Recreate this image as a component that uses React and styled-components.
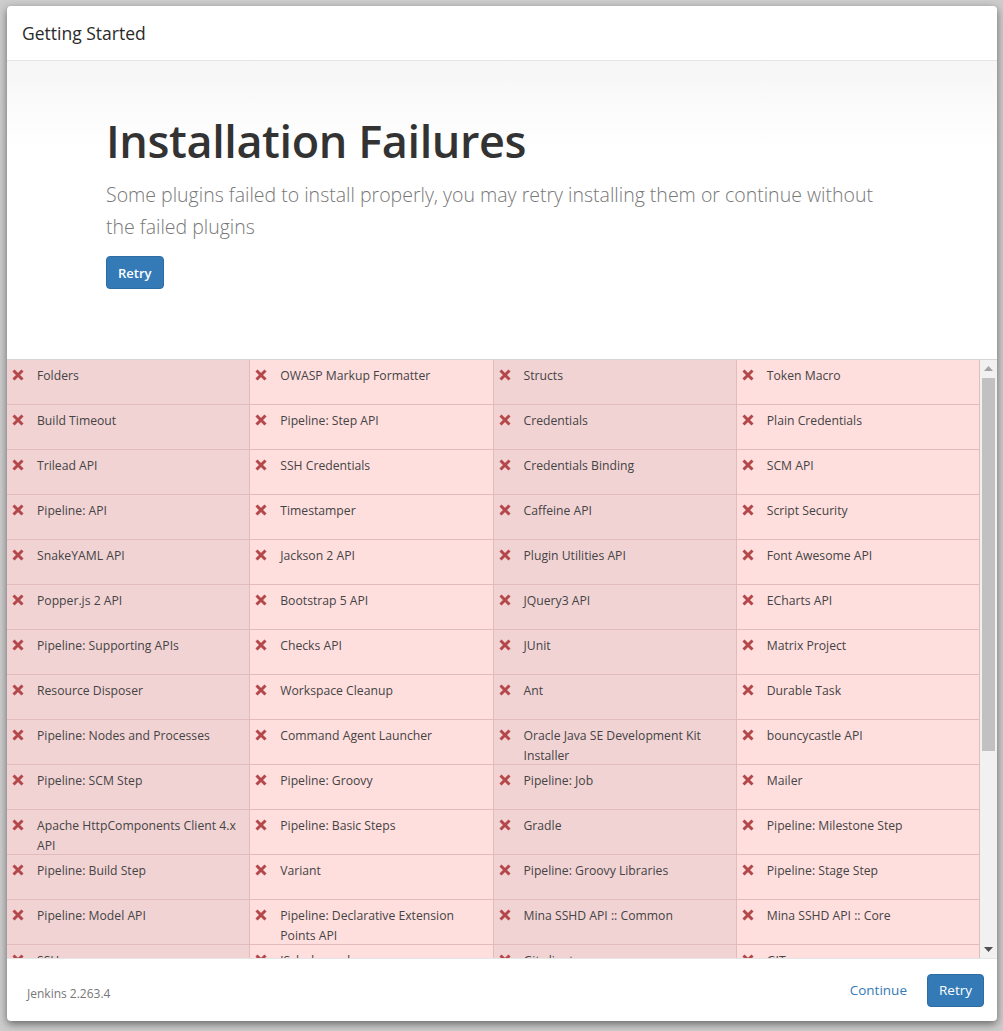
import React from "react";
import styled, { createGlobalStyle } from "styled-components";

const plugins = [
  "Folders", "OWASP Markup Formatter", "Structs", "Token Macro",
  "Build Timeout", "Pipeline: Step API", "Credentials", "Plain Credentials",
  "Trilead API", "SSH Credentials", "Credentials Binding", "SCM API",
  "Pipeline: API", "Timestamper", "Caffeine API", "Script Security",
  "SnakeYAML API", "Jackson 2 API", "Plugin Utilities API", "Font Awesome API",
  "Popper.js 2 API", "Bootstrap 5 API", "JQuery3 API", "ECharts API",
  "Pipeline: Supporting APIs", "Checks API", "JUnit", "Matrix Project",
  "Resource Disposer", "Workspace Cleanup", "Ant", "Durable Task",
  "Pipeline: Nodes and Processes", "Command Agent Launcher", "Oracle Java SE Development Kit Installer", "bouncycastle API",
  "Pipeline: SCM Step", "Pipeline: Groovy", "Pipeline: Job", "Mailer",
  "Apache HttpComponents Client 4.x API", "Pipeline: Basic Steps", "Gradle", "Pipeline: Milestone Step",
  "Pipeline: Build Step", "Variant", "Pipeline: Groovy Libraries", "Pipeline: Stage Step",
  "Pipeline: Model API", "Pipeline: Declarative Extension Points API", "Mina SSHD API :: Common", "Mina SSHD API :: Core",
  "SSH server", "JSch dependency", "Git client", "GIT server",
];

const GlobalStyle = createGlobalStyle`
  html, body {
    margin: 0;
    background: #cdcdcd;
  }
  body {
    font-family: "Open Sans", "Noto Sans", "Liberation Sans", sans-serif;
    color: #333;
  }
`;

const Page = styled.div`
  box-sizing: border-box;
  width: 1003px;
  height: 1031px;
  padding: 6px 6px 10px 7px;
`;

const Dialog = styled.div`
  width: 990px;
  height: 1015px;
  background: #fff;
  border-radius: 4px;
  box-shadow: 0 3px 9px rgba(0, 0, 0, 0.5);
  display: flex;
  flex-direction: column;
  overflow: hidden;
`;

const Header = styled.div`
  box-sizing: border-box;
  height: 55px;
  flex: none;
  display: flex;
  align-items: center;
  padding: 0 15px;
  border-bottom: 1px solid #e5e5e5;
`;

const Title = styled.h4`
  margin: 0 0 1px;
  font-size: 17.5px;
  font-weight: 500;
  color: #2a2a2a;
`;

const Intro = styled.div`
  box-sizing: border-box;
  height: 298px;
  flex: none;
  padding: 48px 0 0 99px;
  background: linear-gradient(#f6f6f6, #fff 90px);
`;

const Heading = styled.h1`
  margin: 0;
  font-size: 45px;
  line-height: 64px;
  font-weight: 600;
  color: #333;
  letter-spacing: -0.4px;
`;

const Lead = styled.p`
  margin: 6px 0 0;
  width: 800px;
  font-size: 19.5px;
  line-height: 32px;
  font-weight: 300;
  color: #777;
`;

const Button = styled.button`
  box-sizing: border-box;
  height: 33px;
  padding: 0 11px;
  margin-top: ${(p) => p.$top || 0}px;
  background: #337ab7;
  border: 1px solid #2e6da4;
  border-radius: 4px;
  color: #fff;
  font-family: inherit;
  font-size: ${(p) => p.$size || 13}px;
  font-weight: ${(p) => p.$weight || 600};
`;

const ListArea = styled.div`
  box-sizing: border-box;
  height: 599px;
  flex: none;
  display: flex;
  border-top: 1px solid #d6d6d6;
  overflow: hidden;
`;

const PluginGrid = styled.div`
  flex: 1;
  display: grid;
  grid-template-columns: repeat(4, 1fr);
  align-content: start;
  overflow: hidden;
`;

const ScrollBar = styled.div`
  flex: none;
  width: 17px;
  display: flex;
  flex-direction: column;
  background: #f1f1f1;
`;

const ScrollArrow = styled.div`
  flex: none;
  height: 17px;
  display: flex;
  align-items: center;
  justify-content: center;
`;

const ScrollTrack = styled.div`
  flex: 1;
  padding: 1px 2px;
`;

const ScrollThumb = styled.div`
  height: 373px;
  background: #c1c1c1;
`;

const Cell = styled.div`
  box-sizing: border-box;
  min-height: 45px;
  display: flex;
  align-items: flex-start;
  gap: 13px;
  padding: 6px 8px 3px 5px;
  background: ${(p) => (p.$odd ? "#ffdede" : "#f2d3d4")};
  border-right: 1px solid #e2bcbd;
  border-bottom: 1px solid #e2bcbd;
  font-size: 12.2px;
  line-height: 20px;
  color: #444;
`;

const FailIcon = styled.svg`
  flex: none;
  width: 12px;
  height: 12px;
  margin-top: 3px;
`;

const Footer = styled.div`
  box-sizing: border-box;
  flex: 1;
  display: flex;
  align-items: center;
  gap: 20px;
  padding: 0 13px 0 20px;
  border-top: 1px solid #e5e5e5;
`;

const Version = styled.span`
  flex: 1;
  font-size: 12px;
  color: #777;
  margin-top: 6px;
`;

const LinkButton = styled.a`
  font-size: 13.5px;
  color: #337ab7;
  cursor: pointer;
`;

const Cross = () => (
  <FailIcon viewBox="0 0 12 12">
    <path d="M1.5 1.5L10.5 10.5M10.5 1.5L1.5 10.5" stroke="#b4474a" strokeWidth="3" strokeLinecap="butt" />
  </FailIcon>
);

const Arrow = ({ up }) => (
  <svg width="9" height="5" viewBox="0 0 9 5">
    <polygon points={up ? "4.5,0 9,5 0,5" : "0,0 9,0 4.5,5"} fill={up ? "#a3a3a3" : "#505050"} />
  </svg>
);

const App = () => {
  return (
    <Page>
      <GlobalStyle />
      <Dialog>
        <Header>
          <Title>Getting Started</Title>
        </Header>
        <Intro>
          <Heading>Installation Failures</Heading>
          <Lead>
            Some plugins failed to install properly, you may retry installing them or continue without the failed plugins
          </Lead>
          <Button $top={13}>Retry</Button>
        </Intro>
        <ListArea>
          <PluginGrid>
            {plugins.map((name, i) => (
              <Cell key={name + i} $odd={i % 2 === 1}>
                <Cross />
                <span>{name}</span>
              </Cell>
            ))}
          </PluginGrid>
          <ScrollBar>
            <ScrollArrow>
              <Arrow up />
            </ScrollArrow>
            <ScrollTrack>
              <ScrollThumb />
            </ScrollTrack>
            <ScrollArrow>
              <Arrow />
            </ScrollArrow>
          </ScrollBar>
        </ListArea>
        <Footer>
          <Version>Jenkins 2.263.4</Version>
          <LinkButton>Continue</LinkButton>
          <Button $size={13.5} $weight={500}>Retry</Button>
        </Footer>
      </Dialog>
    </Page>
  );
};

export default App;
